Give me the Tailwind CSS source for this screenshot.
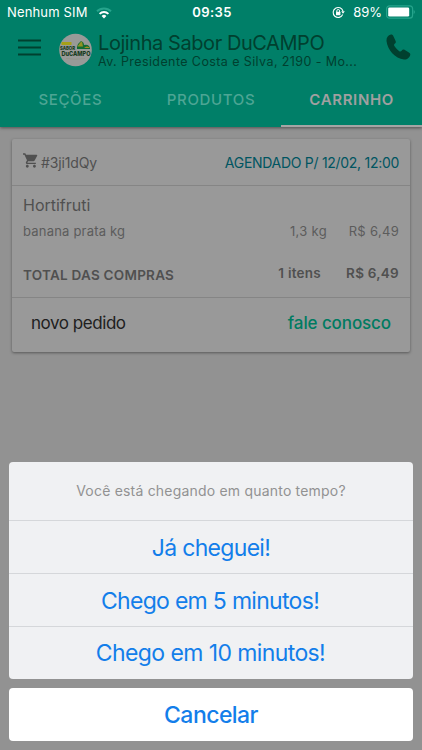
<!DOCTYPE html>
<html lang="pt-BR">
<head>
    <meta charset="UTF-8">
    <meta name="viewport" content="width=device-width, initial-scale=1.0">
    <title>Lojinha Sabor DuCAMPO</title>
    <script src="https://cdn.jsdelivr.net/npm/@tailwindcss/browser@4"></script>
    <style>
        body {
            font-family: Inter, 'Liberation Sans', sans-serif;
        }
    </style>
</head>
<body class="relative h-[750px] w-[422px] overflow-hidden bg-[#929292] whitespace-nowrap">

    <header class="h-[127px] bg-[#007f68] shadow-[0_1px_3px_rgba(0,0,0,0.45)]">
        <!-- Status bar -->
        <div class="flex h-6 items-center pt-px pl-[7px] pr-[7px] text-white">
            <div class="flex flex-1 items-center gap-2">
                <span class="text-[13px] tracking-[0.15px]">Nenhum SIM</span>
                <svg class="h-[12px] w-[16px]" viewBox="0 0 16 12" fill="none">
                    <path d="M1 4.3a10 10 0 0 1 14 0" stroke="#26a48c" stroke-width="2"/>
                    <path d="M3.6 6.9a6.3 6.3 0 0 1 8.8 0" stroke="#fff" stroke-width="2"/>
                    <path d="M5.6 9a3.5 3.5 0 0 1 4.8 0L8 11.4z" fill="#fff"/>
                </svg>
            </div>
            <span class="pl-[2px] text-[13px] font-semibold tracking-[0.4px]">09:35</span>
            <div class="flex flex-1 items-center justify-end">
                <svg class="mr-[8px] h-[13px] w-[13px]" viewBox="0 0 13 13" fill="none">
                    <path d="M10.7 8.6A5 5 0 1 1 11 5.2" stroke="#fff" stroke-width="1.1"/>
                    <path d="M9.2 5.3h3.6L11 7.8z" fill="#fff"/>
                    <path d="M4.8 6V4.9a1.4 1.4 0 0 1 2.8 0V6" stroke="#fff"/>
                    <rect x="4" y="5.8" width="4.4" height="3.4" rx=".5" fill="#fff"/>
                </svg>
                <span class="text-[13px]">89%</span>
                <svg class="mb-[2px] ml-[4px] h-[14px] w-[29px]" viewBox="0 0 29 14">
                    <rect x=".6" y=".8" width="26" height="12.4" rx="3" fill="none" stroke="#26a48c" stroke-width="1.2"/>
                    <rect x="2.2" y="2.4" width="21" height="9.2" rx="1.4" fill="#fff"/>
                    <path d="M27.6 5v4q1.3-.5 1.3-2t-1.3-2z" fill="#26a48c"/>
                </svg>
            </div>
        </div>

        <!-- Toolbar -->
        <div class="flex h-12 items-center pl-[18px] pr-[11px] text-[#00402f]">
            <svg class="mb-[2px] h-[17px] w-[23px]" viewBox="0 0 23 17" stroke="#00402f" stroke-width="1.8">
                <path d="M0 1.5h23M0 8.5h23M0 15.5h23"/>
            </svg>
            <svg class="ml-[18px] mt-[3px] h-[34px] w-[33px] overflow-visible" viewBox="0 0 33 34">
                <circle cx="16.5" cy="17" r="16.3" fill="#999a98"/>
                <path d="M18 14q1-4 4-6 3 1 3 4 3-1 5 1l1 2v1H18z" fill="#126b32"/>
                <path d="M18.5 13.5q3-5 4.500-5l1 5z" fill="#929323"/>
                <path d="M25 15q3-3 6 0z" fill="#a78e20"/>
                <rect x="2.5" y="9" width="10" height="3" fill="#a6a017"/>
                <text x="1" y="16.8" font-size="4.8" font-weight="800" textLength="15" lengthAdjust="spacingAndGlyphs" fill="#173a20">SABOR</text>
                <text x="2.5" y="22.6" font-size="6.6" font-weight="800" textLength="29" lengthAdjust="spacingAndGlyphs" fill="#173a20">DuCAMPO</text>
                <path d="M7 25.5q9 1.5 19 0" fill="none" stroke="#8e9488" stroke-width=".8"/>
            </svg>
            <div class="ml-[6px] flex-1">
                <div class="mt-[6px] text-[20px] leading-[21px] tracking-[-0.43px]">Lojinha Sabor DuCAMPO</div>
                <div class="text-[12.5px] leading-[15px] tracking-[0.4px]">Av. Presidente Costa e Silva, 2190 - Mo...</div>
            </div>
            <svg class="mb-[2px] h-[26px] w-[25px]" viewBox="0 0 25 26" fill="#00402f">
                <path d="M5 .5C2 1 .3 3.5.5 7 1.500 16 9 24.500 18 25.500c3 .3 6-2 6.300-5 .1-1-.8-1.500-1.800-2.200l-4-2.500c-1.200-.6-2-.2-2.900.9-.8 1-1.600 1.100-2.600.3-2-1.500-3.500-3.300-4.600-5-.6-1-.4-1.700.6-2.500 1-.8 1-1.700.5-2.800L7.300 2C6.700.8 6 .3 5 .5z"/>
            </svg>
        </div>

        <!-- Tabs -->
        <nav class="grid h-[55px] grid-cols-3 text-center text-[15px] leading-[55px] font-medium tracking-[0.65px] text-[#4da594]">
            <a>SEÇÕES</a>
            <a>PRODUTOS</a>
            <a class="h-[55px] border-b-2 border-[#a5a5a5] font-semibold text-[#a0a0a0]">CARRINHO</a>
        </nav>
    </header>

    <!-- Order card -->
    <main class="mx-[12px] mt-[12px] h-[213px] rounded-[2px] bg-[#999999] text-[#505050] shadow-[0_1px_3px_rgba(0,0,0,0.4)]">
        <div class="flex h-[47px] items-center justify-between border-b border-[#858585] px-[11px]">
            <div class="flex items-center gap-[3px]">
                <svg class="mb-[3px] h-[15px] w-[15px]" viewBox="1 2 21 20" fill="#505050">
                    <path d="M7 18c-1.1 0-1.99.9-1.99 2S5.9 22 7 22s2-.9 2-2-.9-2-2-2zM1 2v2h2l3.6 7.59-1.35 2.45c-.16.28-.25.61-.25.96 0 1.1.9 2 2 2h12v-2H7.42c-.14 0-.25-.11-.25-.25l.03-.12.9-1.63h7.45c.75 0 1.41-.41 1.75-1.03l3.58-6.49c.08-.14.12-.31.12-.48 0-.55-.45-1-1-1H5.21l-.94-2H1zm16 16c-1.1 0-1.99.9-1.99 2s.89 2 1.99 2 2-.9 2-2-.9-2-2-2z"/>
                </svg>
                <span class="text-[14px] tracking-[-0.15px]">#3ji1dQy</span>
            </div>
            <span class="text-[14px] tracking-[-0.29px] text-[#005561]">AGENDADO P/ 12/02, 12:00</span>
        </div>
        <div class="h-[112px] border-b border-[#858585] px-[11px] pt-[9px]">
            <div class="text-[16px] leading-[20px]">Hortifruti</div>
            <div class="mt-[7px] flex text-[13px] leading-[19px] tracking-[0.2px] text-[#5c5c5c]">
                <span class="flex-1">banana prata kg</span>
                <span class="tracking-[0.3px]">1,3 kg</span>
                <span class="w-[72px] text-right tracking-[0.3px]">R$ 6,49</span>
            </div>
            <div class="mt-[22px] flex text-[13.5px] leading-[20px] font-semibold tracking-[0.25px]">
                <span class="flex-1 pt-[2px]">TOTAL DAS COMPRAS</span>
                <span>1 itens</span>
                <span class="w-[78px] text-right">R$ 6,49</span>
            </div>
        </div>
        <div class="flex h-[51px] items-center justify-between pl-[19px] pr-[19px] text-[17px]">
            <span class="tracking-[-0.45px] text-[#202020]">novo pedido</span>
            <span class="font-medium tracking-[-0.1px] text-[#007b61]">fale conosco</span>
        </div>
    </main>

    <!-- Action sheet -->
    <div class="absolute inset-x-[9px] bottom-[9px] text-center text-[#137eea]">
        <div class="overflow-hidden rounded-[4px] bg-[#f0f1f3]">
            <div class="h-[59px] border-b border-[#d5d7da] text-[14px] leading-[58px] tracking-[0.2px] text-[#929292]">Você está chegando em quanto tempo?</div>
            <div class="h-[53px] border-b border-[#d5d7da] text-[23px] leading-[54px] tracking-[-0.7px]">Já cheguei!</div>
            <div class="h-[53px] border-b border-[#d5d7da] pr-[2px] text-[23px] leading-[54px] tracking-[-0.7px]">Chego em 5 minutos!</div>
            <div class="h-[52px] pr-[1px] text-[23px] leading-[53px] tracking-[-0.6px]">Chego em 10 minutos!</div>
        </div>
        <div class="mt-[9px] h-[53px] rounded-[4px] bg-white text-[23px] leading-[54px] font-medium tracking-[-0.55px]">Cancelar</div>
    </div>

</body>
</html>
